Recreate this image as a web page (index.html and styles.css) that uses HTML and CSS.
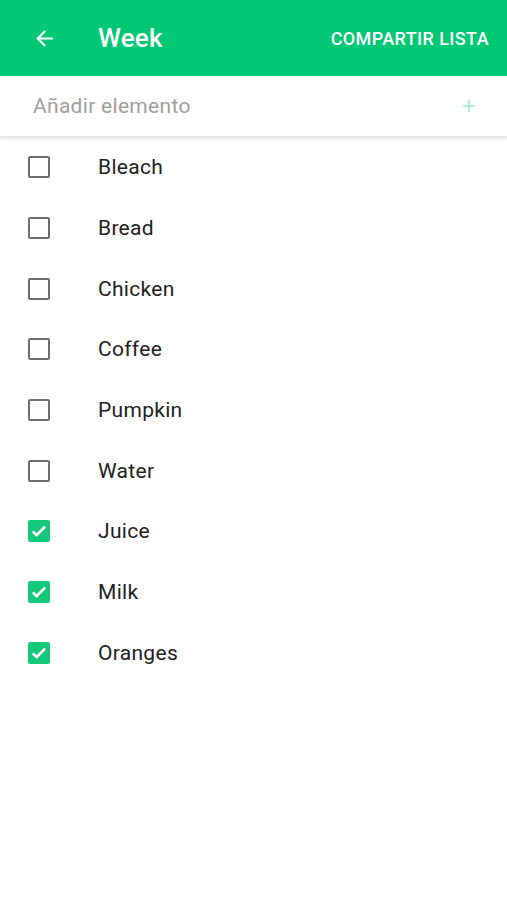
FILE: index.html
```html
<!DOCTYPE html>
<html lang="es">
<head>
    <meta charset="UTF-8">
    <meta name="viewport" content="width=device-width, initial-scale=1.0">
    <title>Week</title>
    <link rel="stylesheet" href="styles.css">
</head>
<body>
    <header class="toolbar">
        <span class="back">
            <svg width="24" height="24" viewBox="0 0 24 24"><path d="M20 11H7.83l5.59-5.59L12 4l-8 8 8 8 1.41-1.41L7.83 13H20v-2z" fill="#fff"/></svg>
        </span>
        <h1 class="title">Week</h1>
        <span class="share">COMPARTIR LISTA</span>
    </header>

    <div class="add-bar">
        <span class="placeholder">Añadir elemento</span>
        <span class="plus">
            <svg width="14" height="14" viewBox="0 0 14 14"><path d="M7 1v12M1 7h12" stroke="#9fe6c6" stroke-width="1.6"/></svg>
        </span>
    </div>

    <ul class="items">
        <li><span class="box"></span>Bleach</li>
        <li><span class="box"></span>Bread</li>
        <li><span class="box"></span>Chicken</li>
        <li><span class="box"></span>Coffee</li>
        <li><span class="box"></span>Pumpkin</li>
        <li><span class="box"></span>Water</li>
        <li><span class="box checked"><svg width="18" height="18" viewBox="0 0 18 18"><path d="M2.8 9.4l3.8 3.7 8.6-8.6" stroke="#fff" stroke-width="2.6" fill="none"/></svg></span>Juice</li>
        <li><span class="box checked"><svg width="18" height="18" viewBox="0 0 18 18"><path d="M2.8 9.4l3.8 3.7 8.6-8.6" stroke="#fff" stroke-width="2.6" fill="none"/></svg></span>Milk</li>
        <li><span class="box checked"><svg width="18" height="18" viewBox="0 0 18 18"><path d="M2.8 9.4l3.8 3.7 8.6-8.6" stroke="#fff" stroke-width="2.6" fill="none"/></svg></span>Oranges</li>
    </ul>
</body>
</html>
```

FILE: styles.css
```css
*{
    margin: 0;
    padding: 0;
    box-sizing: border-box;
}
body{
    font-family: Roboto, "Liberation Sans", sans-serif;
    background: #ffffff;
    color: #212121;
}
.toolbar{
    display: flex;
    align-items: center;
    height: 76px;
    padding: 0 18px 0 32px;
    background: #00c875;
    color: #ffffff;
}
.back{
    display: flex;
    width: 66px;
}
.back svg{
    width: 25px;
    height: 25px;
}
.title{
    flex: 1;
    font-size: 26px;
    font-weight: 500;
    letter-spacing: 0.2px;
}
.share{
    font-size: 18px;
    font-weight: 500;
    letter-spacing: 0.4px;
}
.add-bar{
    display: flex;
    align-items: center;
    height: 61px;
    padding: 0 31px 0 33px;
    border-bottom: 1px solid #e4e4e4;
    box-shadow: 0 2px 3px rgba(0,0,0,0.12);
}
.placeholder{
    flex: 1;
    font-size: 21px;
    letter-spacing: 0.3px;
    color: #9e9e9e;
}
.plus{
    display: flex;
}
.items{
    list-style: none;
}
.items > li{
    display: flex;
    align-items: center;
    height: 60.7px;
    padding-left: 28px;
    font-size: 21px;
    letter-spacing: 0.3px;
    color: #212121;
}
.box{
    display: flex;
    flex-shrink: 0;
    align-items: center;
    justify-content: center;
    width: 22px;
    height: 22px;
    margin-right: 48px;
    border: 2px solid #6e6e6e;
    border-radius: 2px;
}
.box.checked{
    border: none;
    background: #14c879;
}
```
